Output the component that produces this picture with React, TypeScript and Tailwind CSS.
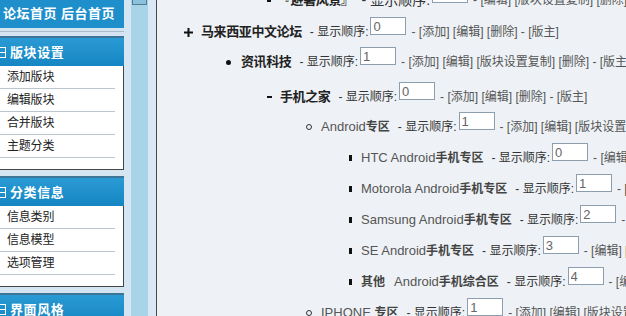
import React from "react";

type Bullet = "plus" | "disc" | "dash" | "circle" | "bar" | "square";

function BulletMark({ kind }: { kind: Bullet }) {
  if (kind === "plus")
    return (
      <svg width="9" height="9" viewBox="0 0 9 9">
        <rect x="0" y="3.5" width="9" height="2" fill="#111" />
        <rect x="3.5" y="0" width="2" height="9" fill="#111" />
      </svg>
    );
  if (kind === "disc") return <span className="block w-[5px] h-[5px] rounded-full bg-[#111]" />;
  if (kind === "dash") return <span className="block w-[5px] h-[2px] bg-[#111]" />;
  if (kind === "circle") return <span className="block w-[6px] h-[6px] rounded-full border border-[#333]" />;
  if (kind === "bar") return <span className="block w-[3px] h-[6px] bg-[#111]" />;
  return <span className="block w-[4px] h-[4px] bg-[#111]" />;
}

type RowProps = {
  bullet: Bullet;
  pad: string;
  bw: string;
  h: string;
  label: React.ReactNode;
  value: string;
  links: string;
  dark?: boolean;
  big?: boolean;
};

function Row({ bullet, pad, bw, h, label, value, links, dark, big }: RowProps) {
  return (
    <div className={`flex items-start shrink-0 whitespace-nowrap ${pad} ${h}`}>
      <div className="flex items-center h-[16px] mt-[7px]">
        <span className={`${bw} flex items-center`}>
          <BulletMark kind={bullet} />
        </span>
        <span
          className={
            dark
              ? "text-[13px] font-bold text-[#222] leading-[16px] tracking-[-0.4px]"
              : "text-[13px] text-[#555] leading-[16px]"
          }
        >
          {label}
        </span>
        <span
          className={
            big
              ? "ml-[8px] text-[14px] text-[#333] leading-[16px]"
              : "ml-[8px] text-[12px] text-[#333] leading-[16px]"
          }
        >
          - 显示顺序:
        </span>
      </div>
      <input
        readOnly
        value={value}
        className="ml-[2px] w-[36px] h-[18px] shrink-0 border border-[#8d9eae] bg-white px-[2px] text-[13px] leading-[16px] text-[#666] outline-none font-['Liberation_Sans',sans-serif]"
      />
      <div className="flex items-center h-[16px] mt-[7px] ml-[5px] text-[12px] text-[#555] leading-[16px]">{links}</div>
    </div>
  );
}

function MixLabel({ latin, cn }: { latin: string; cn: string }) {
  return (
    <>
      <span>{latin}</span>
      <span className="font-bold text-[#444] text-[12px]">{cn}</span>
    </>
  );
}

function SectionHeader({ title }: { title: string }) {
  return (
    <div className="h-[30px] shrink-0 bg-gradient-to-b from-[#2a9ad4] to-[#1586c3] border-t-2 border-[#3c7598] flex items-center overflow-hidden">
      <svg width="10" height="11" viewBox="0 0 10 11" className="-ml-[4px] shrink-0">
        <rect x="0.5" y="0.5" width="9" height="10" fill="none" stroke="#fff" strokeWidth="1" />
        <rect x="1" y="5" width="8" height="1" fill="#fff" />
      </svg>
      <span className="ml-[4px] text-[13px] font-bold text-white tracking-[0.6px] leading-none">{title}</span>
    </div>
  );
}

function MenuList({ items }: { items: string[] }) {
  return (
    <div className="bg-white border-r border-b border-[#454545] pb-[11px] shrink-0">
      {items.map((t) => (
        <div
          key={t}
          className="mr-[8px] h-[23px] border-b border-[#bcc6ce] flex items-center pl-[7px] text-[12px] text-[#222] tracking-[-0.2px]"
        >
          {t}
        </div>
      ))}
    </div>
  );
}

function Sidebar() {
  return (
    <div className="w-[124px] shrink-0 flex flex-col bg-[#d4e4f0]">
      <div className="h-[28px] shrink-0 bg-[#1f8fcb] flex items-center pl-[3px] text-[13px] font-bold text-white tracking-[0.5px] whitespace-nowrap">
        论坛首页&nbsp;后台首页
      </div>
      <div className="h-[8px] shrink-0 pt-[3px]">
        <div className="h-[1px] bg-[#a7bccb]" />
      </div>
      <SectionHeader title="版块设置" />
      <MenuList items={["添加版块", "编辑版块", "合并版块", "主题分类"]} />
      <div className="h-[6px] shrink-0" />
      <SectionHeader title="分类信息" />
      <MenuList items={["信息类别", "信息模型", "选项管理"]} />
      <div className="h-[6px] shrink-0" />
      <SectionHeader title="界面风格" />
    </div>
  );
}

export default function App() {
  return (
    <div className="w-[626px] h-[316px] overflow-hidden flex bg-[#eef2f6] font-['Liberation_Sans','Noto_Sans_CJK_SC',sans-serif]">
      <Sidebar />
      <div className="w-[7px] shrink-0 bg-[#d5e5f2]" />
      <div className="w-[17px] shrink-0 bg-[#a8d4e8] pt-0 px-[1px]">
        <div className="h-[5px] bg-[#8cc1dc] border-x border-b border-[#4f7c99]" />
      </div>
      <div className="w-[8px] shrink-0 bg-[#dae8f5]" />
      <div className="w-[1px] shrink-0 bg-[#474b4f]" />
      <div className="flex-1 min-w-0 overflow-hidden flex flex-col">
        <div className="-mt-[15px] flex flex-col">
          <Row bullet="square" pad="pl-[110px]" bw="w-[11px]" h="h-[32px]" dark big label="『避暑风景』" value="" links="- [编辑] [版块设置复制] [删除] - [版主]" />
          <Row bullet="plus" pad="pl-[27px]" bw="w-[17px]" h="h-[30px]" dark label="马来西亚中文论坛" value="0" links="- [添加] [编辑] [删除] - [版主]" />
          <Row bullet="disc" pad="pl-[69px]" bw="w-[15px]" h="h-[35px]" dark label="资讯科技" value="1" links="- [添加] [编辑] [版块设置复制] [删除] - [版主]" />
          <Row bullet="dash" pad="pl-[110px]" bw="w-[13px]" h="h-[30px]" dark label="手机之家" value="0" links="- [添加] [编辑] [删除] - [版主]" />
          <Row bullet="circle" pad="pl-[149px]" bw="w-[15px]" h="h-[31px]" label={<MixLabel latin="Android" cn="专区" />} value="1" links="- [添加] [编辑] [版块设置复制] [删除] - [版主]" />
          <Row bullet="bar" pad="pl-[192px]" bw="w-[12px]" h="h-[31px]" label={<MixLabel latin="HTC Android" cn="手机专区" />} value="0" links="- [编辑] [版块设置复制] [删除] - [版主]" />
          <Row bullet="bar" pad="pl-[192px]" bw="w-[12px]" h="h-[31px]" label={<MixLabel latin="Motorola Android" cn="手机专区" />} value="1" links="- [编辑] [版块设置复制] [删除] - [版主]" />
          <Row bullet="bar" pad="pl-[192px]" bw="w-[12px]" h="h-[31px]" label={<MixLabel latin="Samsung Android" cn="手机专区" />} value="2" links="- [编辑] [版块设置复制] [删除] - [版主]" />
          <Row bullet="bar" pad="pl-[192px]" bw="w-[12px]" h="h-[31px]" label={<MixLabel latin="SE Android" cn="手机专区" />} value="3" links="- [编辑] [版块设置复制] [删除] - [版主]" />
          <Row
            bullet="bar"
            pad="pl-[192px]"
            bw="w-[12px]"
            h="h-[31px]"
            label={
              <>
                <span className="font-bold text-[#444] text-[12px]">其他</span>
                <span className="ml-[9px]">Android</span>
                <span className="font-bold text-[#444] text-[12px]">手机综合区</span>
              </>
            }
            value="4"
            links="- [编辑] [版块设置复制] [删除] - [版主]"
          />
          <Row bullet="circle" pad="pl-[149px]" bw="w-[15px]" h="h-[31px]" label={<MixLabel latin="IPHONE " cn="专区" />} value="1" links="- [添加] [编辑] [版块设置复制] [删除] - [版主]" />
        </div>
      </div>
    </div>
  );
}
